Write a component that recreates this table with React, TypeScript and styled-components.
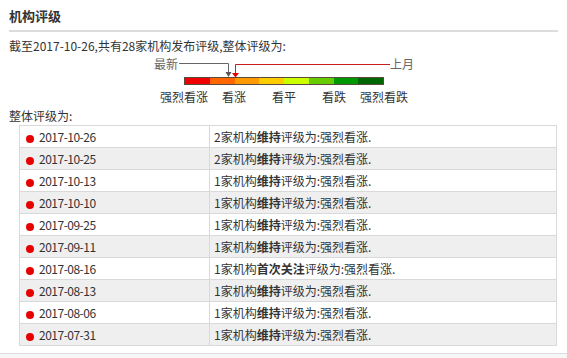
import React from 'react'
import styled, { createGlobalStyle } from 'styled-components'

const GlobalStyle = createGlobalStyle`
  html, body {
    margin: 0;
    padding: 0;
    background: #fff;
  }
  body {
    font-family: "Noto Sans CJK SC", "Noto Sans", sans-serif;
    font-size: 12px;
    color: #333;
  }
`

const Page = styled.div`
  width: 567px;
`

const Section = styled.div`
  padding: 0 9px;
`

const Title = styled.h3`
  margin: 0;
  height: 27px;
  padding-top: 3px;
  line-height: 26px;
  font-size: 13px;
  font-weight: bold;
  color: #333;
  border-bottom: 2px solid #dcdcdc;
`

const Summary = styled.div`
  margin-top: 4px;
  line-height: 20px;
`

const Scale = styled.div`
  margin-left: 175px;
  width: 200px;
`

const MarkerRow = styled.div`
  display: flex;
  align-items: flex-start;
  height: 21px;
  margin-left: -30px;
`

const MarkerLabel = styled.span`
  margin-top: 1px;
  line-height: 14px;
  color: #666;
  white-space: nowrap;
`

const Pointers = styled.svg`
  display: block;
  flex: none;
  margin-left: 1px;
`

const Bar = styled.div`
  display: flex;
  height: 6px;
  border: 1px solid #5a4a3a;
`

const Segment = styled.div<{ $color: string }>`
  flex: 1;
  background: ${p => p.$color};
`

const ScaleLabels = styled.div`
  display: flex;
  margin-top: 4px;
  margin-left: -25px;
  width: 250px;
`

const ScaleLabel = styled.span`
  width: 50px;
  text-align: center;
  line-height: 16px;
  white-space: nowrap;
`

const SubTitle = styled.div`
  padding-top: 2px;
  line-height: 18px;
`

const Table = styled.table`
  margin-left: 10px;
  width: 538px;
  border-collapse: collapse;
`

const Row = styled.tr<{ $alt: boolean }>`
  height: 22px;
  background: ${p => (p.$alt ? '#efefef' : '#fff')};
`

const Cell = styled.td`
  border: 1px solid #d9d9d9;
  padding: 0 0 0 4px;
  line-height: 20px;
  white-space: nowrap;
`

const DateCell = styled(Cell)`
  width: 183px;
  padding-left: 6px;
`

const Dot = styled.span`
  display: inline-block;
  width: 8px;
  height: 8px;
  border-radius: 50%;
  background: #e60000;
  margin-right: 5px;
  vertical-align: -1px;
`

const DateText = styled.span`
  letter-spacing: -0.5px;
`

const Footer = styled.div`
  margin-top: 7px;
  height: 5px;
  border-top: 1px solid #dcdcdc;
  background: #f7f7f7;
`

const segments = ['#f00000', '#ff6600', '#ff9900', '#ffcc00', '#ccff00', '#66cc00', '#009900', '#006600']
const labels = ['强烈看涨', '看涨', '看平', '看跌', '强烈看跌']

// 评级位置 (0 = 强烈看涨, 1 = 强烈看跌)
const latest = 0.21
const lastMonth = 0.245

const rows = [
  { date: '2017-10-26', count: 2, action: '维持' },
  { date: '2017-10-25', count: 2, action: '维持' },
  { date: '2017-10-13', count: 1, action: '维持' },
  { date: '2017-10-10', count: 1, action: '维持' },
  { date: '2017-09-25', count: 1, action: '维持' },
  { date: '2017-09-11', count: 1, action: '维持' },
  { date: '2017-08-16', count: 1, action: '首次关注' },
  { date: '2017-08-13', count: 1, action: '维持' },
  { date: '2017-08-06', count: 1, action: '维持' },
  { date: '2017-07-31', count: 1, action: '维持' },
]

function RatingScale() {
  const barWidth = 200
  // svg starts 7px left of the bar
  const offset = 7
  const w = barWidth + offset + 4
  const a = Math.round(latest * barWidth) + offset + 0.5
  const b = Math.round(lastMonth * barWidth) + offset + 0.5

  return (
    <Scale>
      <MarkerRow>
        <MarkerLabel>最新</MarkerLabel>
        <Pointers width={w} height={21} viewBox={`0 0 ${w} 21`}>
          <path d={`M0 7.5H${a}V17`} stroke="#666" fill="none" />
          <path d={`M${a - 3} 16H${a + 3}L${a} 21Z`} fill="#555" />
          <path d={`M${w} 8.5H${b}V18`} stroke="#c81e1e" fill="none" />
          <path d={`M${b - 3.5} 17H${b + 3.5}L${b} 21.5Z`} fill="#e00000" />
        </Pointers>
        <MarkerLabel>上月</MarkerLabel>
      </MarkerRow>
      <Bar>
        {segments.map(c => (
          <Segment key={c} $color={c} />
        ))}
      </Bar>
      <ScaleLabels>
        {labels.map((l, i) => (
          <ScaleLabel key={i}>{l}</ScaleLabel>
        ))}
      </ScaleLabels>
    </Scale>
  )
}

export default function App() {
  return (
    <Page>
      <GlobalStyle />
      <Section>
        <Title>机构评级</Title>
        <Summary>截至2017-10-26,共有28家机构发布评级,整体评级为:</Summary>
        <RatingScale />
        <SubTitle>整体评级为:</SubTitle>
        <Table>
          <tbody>
            {rows.map((r, i) => (
              <Row key={r.date} $alt={i % 2 === 1}>
                <DateCell>
                  <Dot />
                  <DateText>{r.date}</DateText>
                </DateCell>
                <Cell>
                  {r.count}家机构<b>{r.action}</b>评级为:强烈看涨.
                </Cell>
              </Row>
            ))}
          </tbody>
        </Table>
      </Section>
      <Footer />
    </Page>
  )
}
